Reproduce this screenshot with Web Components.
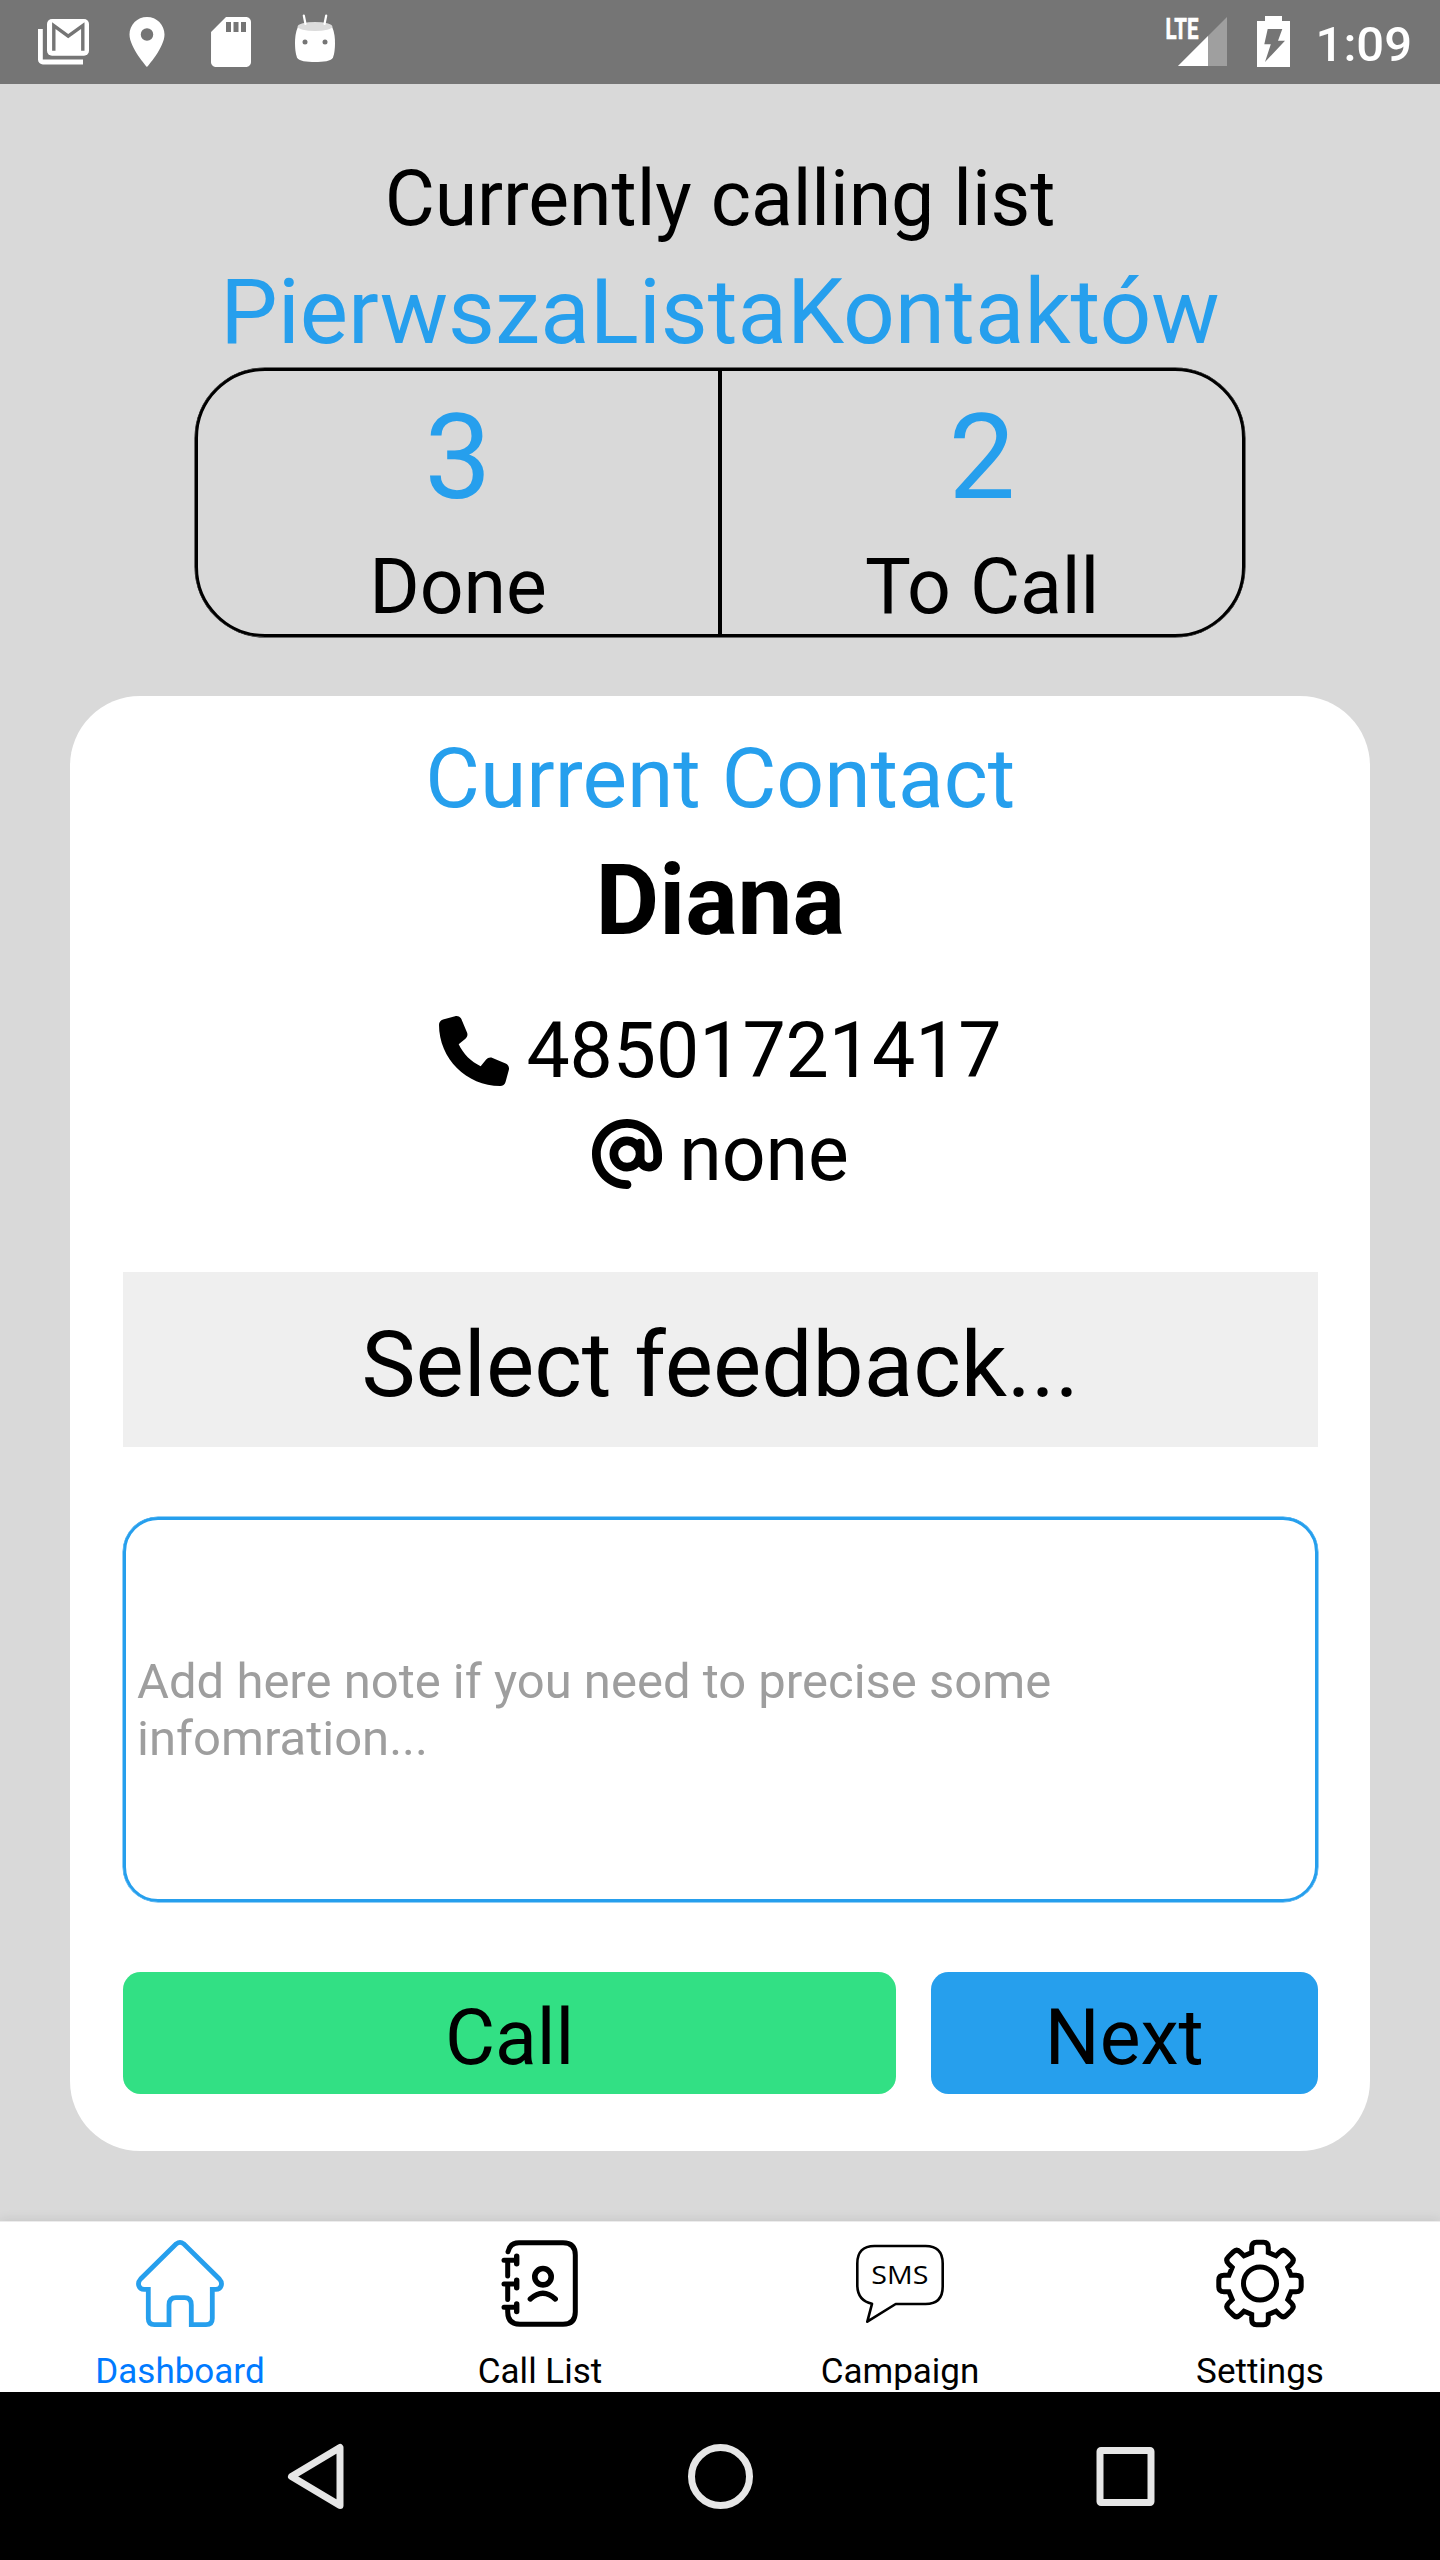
<!DOCTYPE html>
<html lang="en">
<head>
<meta charset="utf-8">
<title>Dashboard</title>
<style>
html,body{margin:0;padding:0}
body{width:1440px;height:2560px;overflow:hidden;background:#d9d9d9;font-family:Roboto,"Noto Sans",sans-serif;color:#000}
</style>
</head>
<body>
<call-app></call-app>
<script>
const BLUE = '#269fed';

class Base extends HTMLElement {
  connectedCallback() {
    if (this.shadowRoot) return;
    this.attachShadow({ mode: 'open' }).innerHTML = this.view();
  }
}

/* One line of text: "size" font px, "h" box height, "base" baseline offset from the top of the box. */
customElements.define('text-line', class extends Base {
  view() {
    const n = k => parseFloat(this.getAttribute(k));
    const asc = Math.round(0.9277 * n('size')), desc = Math.round(0.2441 * n('size'));
    const lh = 2 * (n('base') - asc) + asc + desc;
    const ls = n('size') === 77 ? '-.08px' : 'normal';
    return `<style>:host{display:block;white-space:nowrap;text-align:center;font-size:${n('size')}px;letter-spacing:${ls};height:${n('h')}px;line-height:${lh}px}</style><slot></slot>`;
  }
});

customElements.define('status-bar', class extends Base {
  view() {
    return `<style>
      :host{display:flex;justify-content:space-between;height:84px;background:#757575;color:#fff;padding:0 28px 0 33px;box-sizing:border-box}
      .l{display:flex;gap:24px;padding-top:12px}
      .r{display:flex}
      svg{display:block}
    </style>
    <div class="l">
      <svg width="60" height="60" fill="#fff">
        <rect x="14" y="7" width="42" height="36.7" rx="5"/>
        <path d="M20.8 38.8V13.6L35.2 24.2 49.8 13.6V38.8" fill="none" stroke="#757575" stroke-width="3.4"/>
        <path d="M7.4 17V47.500a2.500 2.500 0 0 0 2.500 2.500H50" fill="none" stroke="#fff" stroke-width="4.800"/>
      </svg>
      <svg width="60" height="60" viewBox="0 0 24 24" fill="#fff"><path d="M12 2C8.130 2 5 5.130 5 9c0 5.250 7 13 7 13s7-7.750 7-13c0-3.870-3.130-7-7-7zm0 9.500a2.500 2.500 0 1 1 0-5 2.500 2.500 0 0 1 0 5z"/></svg>
      <svg width="60" height="60" viewBox="0 0 24 24" fill="#fff"><path d="M18 2h-8L4.020 8 4 20c0 1.100.9 2 2 2h12c1.100 0 2-.9 2-2V4c0-1.100-.9-2-2-2zm-6 6h-2V4h2v4zm3 0h-2V4h2v4zm3 0h-2V4h2v4z"/></svg>
      <svg width="60" height="60">
        <path d="M13 14.500C10.500 20 10 26 10 31c0 6 .6 10.500 2 14.500C13.500 49.300 22 50 30 50s16.500-.7 18-4.500c1.400-4 2-8.500 2-14.500 0-5-.5-11-3-16.500z" fill="#fff"/>
        <ellipse cx="30" cy="14.500" rx="17.300" ry="4.500" fill="#dcdcdc"/>
        <path d="M18.800 3.500 20.500 12M41.200 3.500 39.500 12" stroke="#fff" stroke-width="2.200" stroke-linecap="round"/>
        <circle cx="20" cy="30" r="2.500" fill="#757575"/><circle cx="40" cy="30" r="2.500" fill="#757575"/>
      </svg>
    </div>
    <div class="r">
      <svg width="156" height="84" viewBox="1160 0 156 84" fill="#fff">
        <path d="M1178 66 1227 17V66z" fill="#9f9f9f"/><path d="M1178 66 1208 36V66z"/>
        <text x="1165.500" y="39" font-size="29.500" font-weight="700" textLength="33" lengthAdjust="spacingAndGlyphs" stroke="#fff" stroke-width=".6">LTE</text>
        <path d="M1265 16h17v5h8v46h-33V21h8z"/>
        <path d="M1267.700 29h14.600L1278 40.700h7L1265 62l5.800-17.700h-6.500z" fill="#757575"/>
      </svg>
      <text-line size="49" h="84" base="61" style="font-weight:500">1:09</text-line>
    </div>`;
  }
});

customElements.define('stat-cell', class extends Base {
  view() {
    return `<style>:host{display:block;flex:1}.n{color:${BLUE}}</style>
      <text-line class="n" size="119" h="159" base="127">${this.getAttribute('value')}</text-line>
      <text-line size="77" h="102" base="83"><slot></slot></text-line>`;
  }
});

customElements.define('stat-box', class extends Base {
  view() {
    return `<style>:host{display:flex;width:1050px;height:269px;box-sizing:border-box;border:3px solid #000;box-shadow:0 0 0 .5px #000;border-radius:70px;margin:0 auto}
      i{width:4px;background:#000}</style>
      <stat-cell value="3">Done</stat-cell><i></i><stat-cell value="2">To Call</stat-cell>`;
  }
});

customElements.define('contact-row', class extends Base {
  view() {
    return `<style>:host{display:flex;justify-content:center;align-items:center;gap:17.500px;height:103px}svg{display:block}</style>
      <svg width="70" height="70" viewBox="0 0 512 512"><path d="${this.getAttribute('icon')}"/></svg>
      <text-line size="77" h="103" base="78"><slot></slot></text-line>`;
  }
});

customElements.define('app-button', class extends Base {
  view() {
    return `<style>:host{display:block;height:122px;border-radius:17.500px}</style>
      <text-line size="77" h="122" base="92"><slot></slot></text-line>`;
  }
});

const PHONE = 'M164.900 24.600c-7.700-18.600-28-28.500-47.400-23.200l-88 24C12.100 30.200 0 46 0 64C0 311.400 200.600 512 448 512c18 0 33.800-12.100 38.600-29.500l24-88c5.300-19.400-4.600-39.700-23.200-47.400l-96-40c-16.300-6.800-35.200-2.100-46.300 11.600L304.700 368C234.300 334.700 177.300 277.700 144 207.300L193.300 167c13.700-11.200 18.400-30 11.600-46.300l-40-96z';
const AT = 'M256 64C150 64 64 150 64 256s86 192 192 192c17.700 0 32 14.300 32 32s-14.300 32-32 32C114.600 512 0 397.400 0 256S114.600 0 256 0S512 114.600 512 256v32c0 53-43 96-96 96c-29.300 0-55.600-13.200-73.200-33.900C320 371.100 289.500 384 256 384c-70.700 0-128-57.300-128-128s57.300-128 128-128c27.900 0 53.700 8.900 74.700 24.100c5.700-5 13.100-8.100 21.300-8.100c17.700 0 32 14.300 32 32v112c0 17.700 14.300 32 32 32s32-14.300 32-32V256c0-106-86-192-192-192zm64 192a64 64 0 1 0 -128 0 64 64 0 1 0 128 0z';

customElements.define('contact-card', class extends Base {
  view() {
    return `<style>
      :host{display:flex;flex-direction:column;width:1300px;height:1455px;box-sizing:border-box;background:#fff;border-radius:70px;margin:59px auto 0;padding:22px 52.500px 0 53px}
      .t{color:${BLUE}}
      .name{font-weight:700;margin:2px 0 38px}
      .sel{background:#efefef;margin-top:67px}
      .note{display:flex;align-items:center;height:385px;box-sizing:border-box;margin-top:70px;border:3px solid ${BLUE};box-shadow:0 0 0 .5px ${BLUE};border-radius:35px;padding:0 11px;color:#9e9e9e;font-size:49px;line-height:57px}
      .note span{padding-top:1px}
      .b{display:flex;gap:35px;margin-top:70px}
      .call{flex:2;background:#32e084}.next{flex:1;background:${BLUE}}
    </style>
    <text-line class="t" size="84" h="111" base="89">Current Contact</text-line>
    <text-line class="name" size="98" h="130" base="103">Diana</text-line>
    <contact-row icon="${PHONE}">48501721417</contact-row>
    <contact-row icon="${AT}">none</contact-row>
    <text-line class="sel" size="91" h="175" base="124">Select feedback...</text-line>
    <div class="note"><span>Add here note if you need to precise some infomration...</span></div>
    <div class="b"><app-button class="call">Call</app-button><app-button class="next">Next</app-button></div>`;
  }
});

const tooth = Array.from({ length: 8 }, (_, i) => {
  const a = i * Math.PI / 4, c = Math.cos(a), s = Math.sin(a);
  const p = (x, y) => `${(44 + x * c - y * s).toFixed(2)} ${(43.500 + x * s + y * c).toFixed(2)}`;
  return `${i ? 'L' : 'M'}${p(-8.300, -31)}L${p(-8.300, -36)}Q${p(-8.300, -41.200)} ${p(-3.500, -41.200)}L${p(3.500, -41.200)}Q${p(8.300, -41.200)} ${p(8.300, -36)}L${p(8.300, -31)}`;
}).join('') + 'Z';

const ICONS = {
  home: `<path stroke="${BLUE}" stroke-width="4.800" d="M40.300 3.800 4.600 39C.5 43.500 3 49.300 8 49.300H12.300V78.500Q12.300 84.700 18.500 84.700H33V65Q33 57.700 40 57.700H48.500Q55.300 57.700 55.300 65V84.700H70Q76.300 84.700 76.300 78.500V49.300H80C85 49.300 87.500 43.500 83.400 39L47.700 3.800Q44 .9 40.300 3.800Z"/>`,
  book: `<g stroke="#000" stroke-width="5" stroke-linecap="round"><path d="M12 11.700Q14 2.700 23 2.700H67Q79.300 2.700 79.300 15V72Q79.300 84.300 67 84.300H24Q11.700 84.300 11.700 72V68M11.700 21V36M11.700 44.500V59.500"/><path d="M8 20.300H20.500M8 44H20.500M8 67.300H20.500"/><path d="M20.700 16.300V23.800M20.700 40.200V47.800M20.700 64V71.500" stroke-width="5.400"/><circle cx="47" cy="36.700" r="8.200" stroke-width="5.600"/><path d="M34.300 59Q47 47.500 59.300 59" stroke-width="5.300"/></g>`,
  sms: `<path stroke="#000" stroke-width="2.600" stroke-linejoin="round" d="M16 63.800Q1.300 60.500 1.300 45V23.500Q1.300 6 18.500 6H69.500Q86.700 6 86.700 23.500V46.500Q86.700 64 69.500 64H39.700L11.300 81.700Z"/><text x="15.300" y="43.500" font-family="Open Sans" font-size="25.500" fill="#000" textLength="57" lengthAdjust="spacingAndGlyphs">SMS</text>`,
  gear: `<path stroke="#000" stroke-width="5" stroke-linejoin="miter" d="${tooth}"/><circle cx="44" cy="43.500" r="16.500" stroke="#000" stroke-width="5"/>`
};

customElements.define('tab-item', class extends Base {
  view() {
    return `<style>:host{display:flex;flex-direction:column;align-items:center;flex:1;padding-top:18px}:host([active]){color:#007aff}svg{display:block;overflow:visible}</style>
      <svg width="88" height="88" fill="none">${ICONS[this.getAttribute('icon')]}</svg>
      <text-line size="35" h="60" base="55"><slot></slot></text-line>`;
  }
});

customElements.define('tab-bar', class extends Base {
  view() {
    return `<style>:host{display:flex;height:171px;box-sizing:border-box;background:#fff;border-top:1px solid #ececec;box-shadow:0 -2px 10px rgba(0,0,0,.08)}</style>
      <tab-item icon="home" active>Dashboard</tab-item><tab-item icon="book">Call List</tab-item><tab-item icon="sms">Campaign</tab-item><tab-item icon="gear">Settings</tab-item>`;
  }
});

customElements.define('nav-bar', class extends Base {
  view() {
    return `<style>:host{display:flex;justify-content:space-between;align-items:center;height:168px;box-sizing:border-box;background:#000;padding:0 282px;position:relative}svg{display:block}</style>
      <svg width="68" height="68" fill="none" stroke="#e6e6e6" stroke-width="7" stroke-linejoin="round"><path d="M9.500 34.500 58 5.500V63.500Z"/></svg>
      <svg width="68" height="68" fill="none" stroke="#e6e6e6" stroke-width="7"><circle cx="34.500" cy="34.500" r="29"/></svg>
      <svg width="68" height="68" fill="none" stroke="#e6e6e6" stroke-width="7"><rect x="10" y="8.500" width="51" height="52" rx="1"/></svg>`;
  }
});

customElements.define('call-app', class extends Base {
  view() {
    return `<style>:host{display:flex;flex-direction:column;width:1440px;height:2560px;background:#d9d9d9}
      main{flex:1;padding-top:60px}
      .list{color:${BLUE}}</style>
      <status-bar></status-bar>
      <main>
        <text-line size="77" h="102" base="81">Currently calling list</text-line>
        <text-line class="list" size="91" h="122" base="97">PierwszaListaKontaktów</text-line>
        <stat-box></stat-box>
        <contact-card></contact-card>
      </main>
      <tab-bar></tab-bar>
      <nav-bar></nav-bar>`;
  }
});
</script>
</body>
</html>
